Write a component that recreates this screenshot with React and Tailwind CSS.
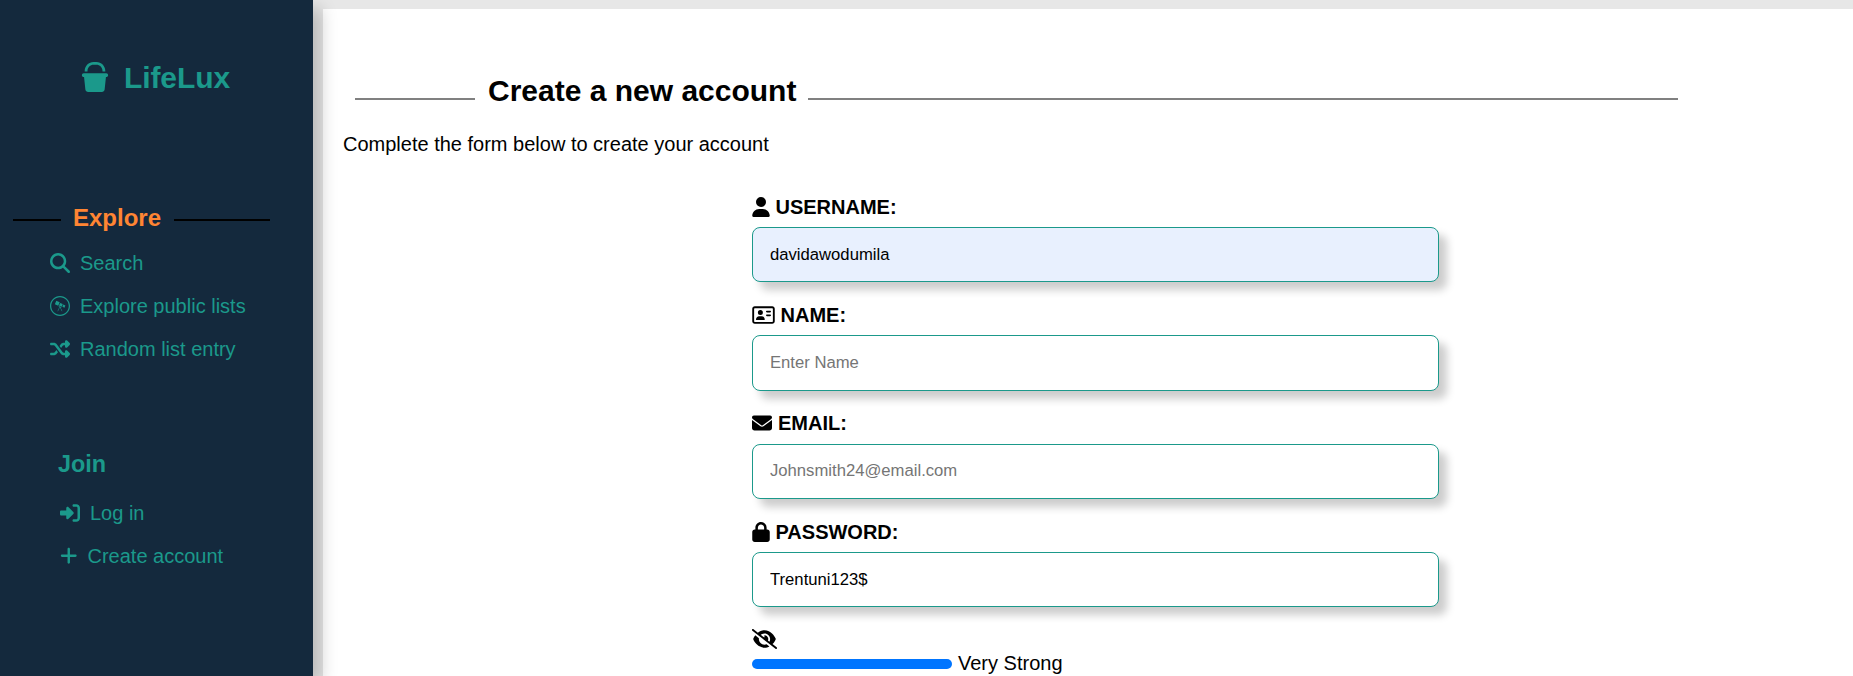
import { FaBucket, FaMagnifyingGlass, FaWpexplorer, FaShuffle, FaRightToBracket, FaPlus, FaUser, FaRegAddressCard, FaEnvelope, FaLock, FaEyeSlash } from "react-icons/fa6";

function NavLink({ icon: Icon, iconClass, textClass = "", children }) {
  return (
    <a className="flex h-[43px] items-center whitespace-nowrap">
      <Icon className={iconClass} />
      <span className={textClass}>{children}</span>
    </a>
  );
}

function Field({ icon: Icon, iconClass, label, value, placeholder, inputClass, textClass = "pt-[2px]" }) {
  return (
    <div className="flex flex-col">
      <label className="flex h-[23px] items-center font-bold">
        <Icon className={iconClass} />
        <span className={textClass}>{label}</span>
      </label>
      <input
        className={`mt-[9px] w-[687px] rounded-[8px] border border-[#1b998b] px-[17px] text-[16.67px] text-black shadow-[8px_8px_8px_rgba(0,0,0,0.2)] outline-none placeholder:text-[#757575] ${inputClass}`}
        defaultValue={value}
        placeholder={placeholder}
      />
    </div>
  );
}

export default function App() {
  return (
    <div className="flex h-[676px] w-full overflow-hidden bg-[#e7e7e7] font-['Liberation_Sans',Arial,sans-serif] text-[20px] leading-[23px] text-black">
      <aside className="relative z-10 h-full w-[313px] shrink-0 bg-[#14293d] text-[#1b998b] shadow-[8px_8px_16px_rgba(0,0,0,0.2)]">
        <div className="flex items-center pt-[59px] pl-[80px] text-[30px] leading-[36px] font-bold">
          <FaBucket className="mr-[13px] mb-px size-[30px]" />
          <span className="pt-px pl-px tracking-[-0.1px]">LifeLux</span>
        </div>
        <div className="mt-[107px] flex items-center pl-[13px] text-[24px] leading-[30px] font-bold text-[#ff8533]">
          <span className="mt-[4px] mr-[12px] h-[2px] w-[48px] bg-black" />
          <span>Explore</span>
          <span className="mt-[4px] ml-[13px] h-[2px] w-[96px] bg-black" />
        </div>
        <nav className="mt-[8px] pl-[50px]">
          <NavLink icon={FaMagnifyingGlass} iconClass="mr-[10px] size-[20px]" textClass="pt-[2px]">Search</NavLink>
          <NavLink icon={FaWpexplorer} iconClass="mr-[10px] size-[20px]" textClass="pt-[2px]">Explore public lists</NavLink>
          <NavLink icon={FaShuffle} iconClass="mr-[10px] size-[20px]" textClass="pt-[2px]">Random list entry</NavLink>
        </nav>
        <h2 className="mt-[79px] pl-[58px] text-[23.4px] leading-[30px] font-bold">Join</h2>
        <nav className="mt-[12px] pl-[60px]">
          <NavLink icon={FaRightToBracket} iconClass="mr-[10px] size-[20px]" textClass="pt-[2px]">Log in</NavLink>
          <NavLink icon={FaPlus} iconClass="-ml-px mr-[9px] size-[19.5px]" textClass="pt-[2px]">Create account</NavLink>
        </nav>
      </aside>
      <main className="mt-[9px] ml-[10px] flex-1 bg-white">
        <div className="flex items-center pt-[64px] pl-[32px] text-[30px] leading-[36px] font-bold">
          <span className="mt-[16px] mr-[13px] h-[2px] w-[120px] bg-[#808080]" />
          <h1>Create a new account</h1>
          <span className="mt-[16px] ml-[12px] h-[2px] w-[870px] bg-[#808080]" />
        </div>
        <p className="mt-[24px] pl-[20px]">Complete the form below to create your account</p>
        <form className="flex flex-col pt-[39px] pl-[429px]">
          <div className="flex flex-col gap-[21px]">
            <Field icon={FaUser} iconClass="mr-[5.5px] h-[20px] w-[18px]" label="USERNAME:" value="davidawodumila" inputClass="h-[55px] bg-[#e8f0fe]" />
            <Field icon={FaRegAddressCard} iconClass="mr-[5.5px] h-[20px] w-[23px]" label="NAME:" placeholder="Enter Name" inputClass="h-[56px] bg-white" />
            <Field icon={FaEnvelope} iconClass="mr-[6px] mb-px size-[20px]" label="EMAIL:" placeholder="Johnsmith24@email.com" inputClass="h-[55px] bg-white pb-[2px]" textClass="" />
            <Field icon={FaLock} iconClass="mr-[5.5px] h-[20px] w-[18px]" label="PASSWORD:" value="Trentuni123$" inputClass="h-[55px] bg-white" />
          </div>
          <FaEyeSlash className="mt-[22px] h-[20px] w-[25px]" />
          <div className="mt-[3px] flex items-center">
            <div className="mt-px mr-[6px] h-[10px] w-[200px] rounded-full bg-[#0075ff]" />
            <span>Very Strong</span>
          </div>
          <FaLock className="mt-px h-[20px] w-[18px]" />
        </form>
      </main>
    </div>
  );
}
